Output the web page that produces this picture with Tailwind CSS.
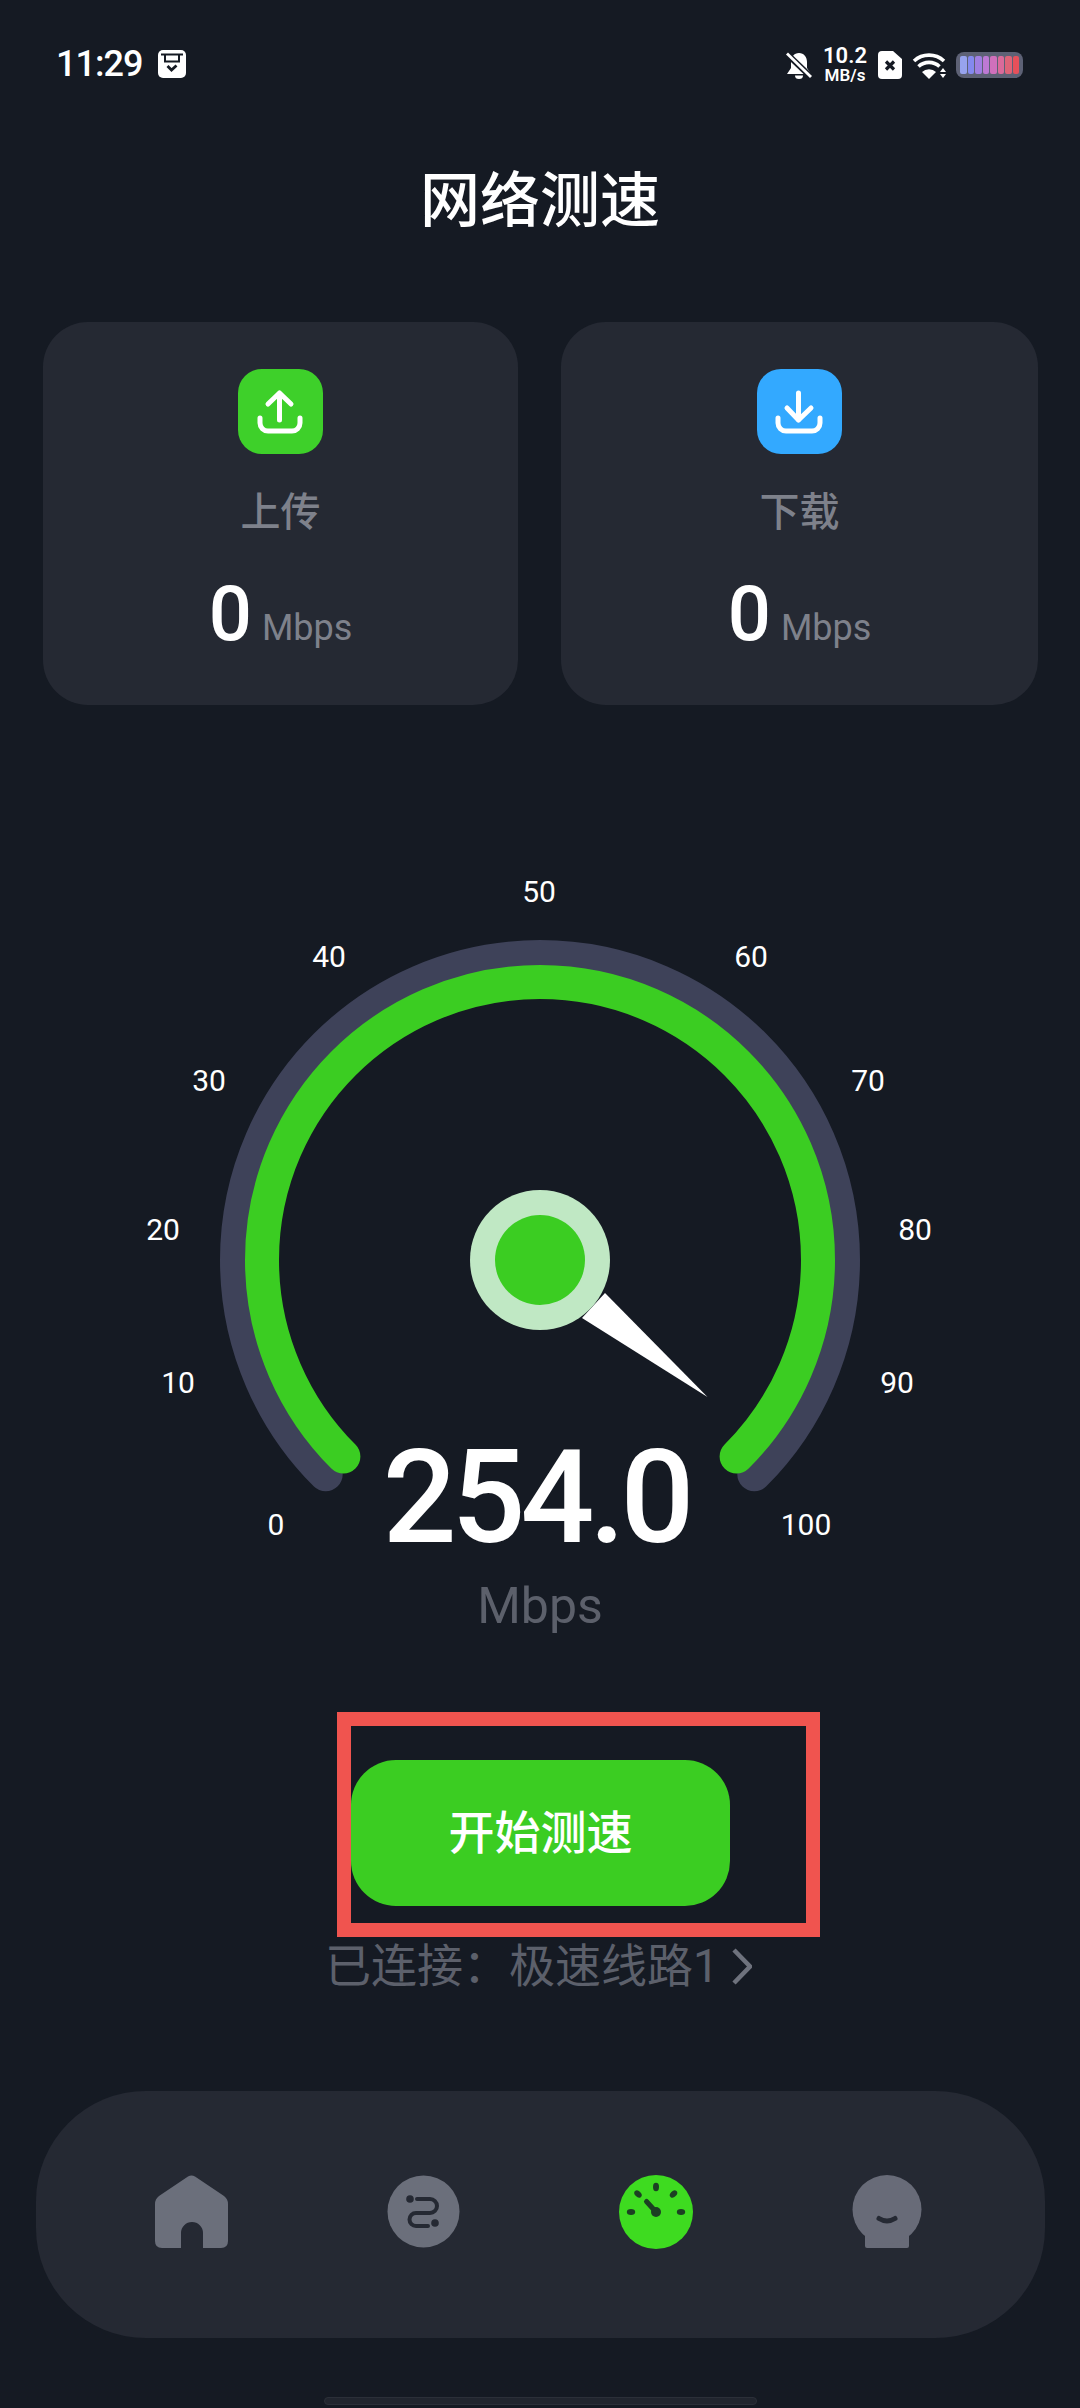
<!DOCTYPE html>
<html lang="zh-CN">
<head>
  <meta charset="UTF-8" />
  <meta name="viewport" content="width=device-width, initial-scale=1.0"/>
  <title>网络测速</title>
  <script src="https://cdn.jsdelivr.net/npm/@tailwindcss/browser@4"></script>
</head>
<body class="bg-[#151a23] font-['Roboto','Noto_Sans_CJK_SC',sans-serif]">
  <div class="w-[1080px] h-[2408px] overflow-hidden flex flex-col">

    <!-- Status bar -->
    <div class="h-[110px] pl-[56px] pr-[57px] pt-[48px] flex items-start justify-between text-white">
      <div class="flex items-center gap-[16px] h-[32px]">
        <span class="text-[36px] leading-[32px] font-medium tracking-[-1px]">11:29</span>
        <svg width="28" height="28" viewBox="0 0 28 28">
          <rect width="28" height="28" rx="5" fill="#fff"/>
          <path d="M3 4.500H25" stroke="#151a23" stroke-width="2"/>
          <path d="M7 5V11.500H21V5" fill="none" stroke="#151a23" stroke-width="2"/>
          <path d="M9.500 16L13.500 20L18.500 15.500" fill="none" stroke="#151a23" stroke-width="2.800"/>
        </svg>
      </div>
      <div class="flex items-center h-[38px] -mt-[2px]">
        <svg width="26" height="27" viewBox="0 0 26 27" class="mr-[11px]">
          <path d="M13 1C18 1 21 5 21 10V16L25 22H1L5 16V10C5 5 8 1 13 1Z" fill="#fff"/>
          <path d="M9 23.500H17A4 3.500 0 0 1 9 23.500Z" fill="#fff"/>
          <path d="M1 2L25 25" stroke="#151a23" stroke-width="6"/>
          <path d="M1 1.500L25 25" stroke="#fff" stroke-width="2.800"/>
        </svg>
        <div class="flex flex-col w-[44px] mr-[11px] font-semibold text-center">
          <span class="text-[22px] leading-[20px]">10.2</span>
          <span class="text-[17px] leading-[18px]">MB/s</span>
        </div>
        <svg width="24" height="28" viewBox="0 0 24 28" class="mr-[10px]">
          <path d="M4 0H15L24 8V24Q24 28 20 28H4Q0 28 0 24V4Q0 0 4 0Z" fill="#fff"/>
          <path d="M8 10.500L16 18.500M16 10.500L8 18.500" stroke="#151a23" stroke-width="3.200"/>
        </svg>
        <svg width="34" height="27" viewBox="0 0 34 27" class="mr-[10px]">
          <path d="M2 9A22 22 0 0 1 32 9" fill="none" stroke="#fff" stroke-width="3.600"/>
          <path d="M6.500 14.500A15.500 15.500 0 0 1 27.500 14.500" fill="none" stroke="#fff" stroke-width="3.600"/>
          <path d="M10 20A10 10 0 0 1 24 20L17 27Z" fill="#fff"/>
          <path d="M28 20l3-4 3 4zM28 22l3 4 3-4z" fill="#fff"/>
        </svg>
        <div class="w-[67px] h-[26px] rounded-[8px] bg-[#5d6175] flex gap-[1px] p-[4px]">
          <span class="flex-1 rounded-[2px] bg-[#97a3ee]"></span>
          <span class="flex-1 rounded-[2px] bg-[#8489ef]"></span>
          <span class="flex-1 rounded-[2px] bg-[#a07fe2]"></span>
          <span class="flex-1 rounded-[2px] bg-[#bd79d4]"></span>
          <span class="flex-1 rounded-[2px] bg-[#d070bc]"></span>
          <span class="flex-1 rounded-[2px] bg-[#da6a9a]"></span>
          <span class="flex-1 rounded-[2px] bg-[#de6478]"></span>
          <span class="flex-1 rounded-[2px] bg-[#e6505a]"></span>
        </div>
      </div>
    </div>

    <!-- Title -->
    <h1 class="mt-[52px] text-center text-white text-[60px] leading-[80px] font-medium">网络测速</h1>

    <!-- Upload / download cards -->
    <div class="mt-[80px] pl-[43px] flex gap-[43px]">
      <div class="w-[475px] h-[383px] rounded-[45px] bg-[#252933] flex flex-col items-center pt-[47px]">
        <div class="w-[85px] h-[85px] rounded-[24px] bg-[#3ed02a]">
          <svg width="85" height="85" viewBox="0 0 85 85" fill="none" stroke="#fff" stroke-width="5" stroke-linecap="round" stroke-linejoin="round">
            <path d="M41.500 24V51M30 35L41.500 24L53 35"/>
            <path d="M22 49V54A8 8 0 0 0 30 62H54A8 8 0 0 0 62 54V49"/>
          </svg>
        </div>
        <div class="mt-[34px] text-[40px] leading-[50px] text-[#7e818b] font-medium">上传</div>
        <div class="mt-[34px] flex items-baseline gap-[10px] text-white">
          <span class="text-[76px] leading-[84px] font-medium">0</span>
          <span class="text-[36px] leading-[40px] text-[#7e818b]">Mbps</span>
        </div>
      </div>
      <div class="w-[477px] h-[383px] rounded-[45px] bg-[#252933] flex flex-col items-center pt-[47px]">
        <div class="w-[85px] h-[85px] rounded-[24px] bg-[#33a9ff]">
          <svg width="85" height="85" viewBox="0 0 85 85" fill="none" stroke="#fff" stroke-width="5" stroke-linecap="round" stroke-linejoin="round">
            <path d="M41.500 24V51M30 39L41.500 51L54 39"/>
            <path d="M21 49V54A8 8 0 0 0 29 62H55A8 8 0 0 0 63 54V49"/>
          </svg>
        </div>
        <div class="mt-[34px] text-[40px] leading-[50px] text-[#7e818b] font-medium">下载</div>
        <div class="mt-[34px] flex items-baseline gap-[10px] text-white">
          <span class="text-[76px] leading-[84px] font-medium">0</span>
          <span class="text-[36px] leading-[40px] text-[#7e818b]">Mbps</span>
        </div>
      </div>
    </div>

    <!-- Gauge -->
    <div class="relative mt-[155px] w-[1080px] h-[800px] shrink-0">
      <svg width="1080" height="800" viewBox="0 0 1080 800">
        <!-- centre is 540,400 in this box -->
        <path d="M325.700 614.300A303 303 0 1 1 754.300 614.300" fill="none" stroke="#3e4259" stroke-width="34" stroke-linecap="round"/>
        <path d="M343.400 596.600A278 278 0 1 1 736.600 596.600" fill="none" stroke="#3bcd22" stroke-width="34" stroke-linecap="round"/>
        <path d="M605 433L707.500 537L582 458Z" fill="#fff"/>
        <circle cx="540" cy="400" r="70" fill="#c0e8c4"/>
        <circle cx="540" cy="400" r="45" fill="#3bcd22"/>
        <g fill="#fff" font-size="30" text-anchor="middle" dominant-baseline="central">
          <text x="276" y="664">0</text>
          <text x="178" y="522">10</text>
          <text x="163" y="369">20</text>
          <text x="209" y="220">30</text>
          <text x="329" y="96">40</text>
          <text x="539" y="31">50</text>
          <text x="751" y="96">60</text>
          <text x="868" y="220">70</text>
          <text x="915" y="369">80</text>
          <text x="897" y="522">90</text>
          <text x="806" y="664">100</text>
        </g>
      </svg>
      <div class="absolute left-0 top-[563px] w-full pr-[8px] text-center text-white text-[130px] leading-[150px] font-medium tracking-[-5px]">254.0</div>
      <div class="absolute left-0 top-[716px] w-full text-center text-[#5c606b] text-[50px] leading-[60px]">Mbps</div>
    </div>

    <!-- Start button -->
    <div class="relative mt-[100px] ml-[351px] w-[379px] h-[146px] shrink-0 rounded-[45px] bg-[#3bcd22] flex items-center justify-center text-white text-[46px] font-medium">
      开始测速
      <div class="absolute left-[-14px] top-[-48px] w-[483px] h-[225px] border-[14px] border-[#f0544f]"></div>
    </div>

    <!-- Connected line -->
    <div class="mt-[28px] pl-[325px] h-[64px] flex items-center text-[#5c606b] text-[46px]">
      <span>已连接：极速线路1</span>
      <svg width="20" height="37" viewBox="0 0 20 37" class="ml-[13px]" fill="none" stroke="#6e727d" stroke-width="4.500">
        <path d="M2 2L18 18.500L2 35"/>
      </svg>
    </div>

    <!-- Bottom nav -->
    <div class="mt-[93px] ml-[36px] w-[1009px] h-[247px] shrink-0 rounded-[110px] bg-[#252933] pl-[119px] pr-[123px] pt-[84px] flex justify-between items-start">
      <svg width="73" height="73" viewBox="0 0 73 73">
        <path d="M33 1.500Q36.500 -0.500 40 1.500L69 21Q73 24 73 29V66Q73 73 66 73H48V58A11 11 0 0 0 26 58V73H7Q0 73 0 66V29Q0 24 4 21Z" fill="#6b6f7b"/>
      </svg>
      <svg width="73" height="73" viewBox="0 0 73 73">
        <circle cx="36.500" cy="36.500" r="36" fill="#6b6f7b"/>
        <circle cx="23" cy="24" r="3.800" fill="#252933"/>
        <circle cx="48" cy="48" r="3.800" fill="#252933"/>
        <path d="M30 24H43A7 7 0 0 1 43 38H29A6.500 6.500 0 0 0 29 51H41" fill="none" stroke="#252933" stroke-width="4" stroke-linecap="round"/>
      </svg>
      <svg width="74" height="74" viewBox="0 0 74 74">
        <circle cx="37" cy="37" r="37" fill="#3edb20"/>
        <g fill="#1c4023">
          <ellipse cx="37" cy="12" rx="3" ry="4.200"/>
          <ellipse cx="19" cy="19" rx="3" ry="4.200" transform="rotate(-45 19 19)"/>
          <ellipse cx="54.500" cy="19" rx="3" ry="4.200" transform="rotate(45 54.500 19)"/>
          <ellipse cx="12" cy="37" rx="4.200" ry="3"/>
          <ellipse cx="62" cy="37" rx="4.200" ry="3"/>
          <circle cx="37" cy="37" r="5"/>
        </g>
        <path d="M27.500 26.500L37 37" stroke="#1c4023" stroke-width="5" stroke-linecap="round"/>
      </svg>
      <svg width="70" height="73" viewBox="0 0 70 73">
        <rect x="13" y="50" width="44" height="23" rx="2" fill="#686b78"/>
        <circle cx="35" cy="34.500" r="34.500" fill="#686b78"/>
        <path d="M27 43.500Q35 48.500 43 43.500" fill="none" stroke="#252933" stroke-width="5" stroke-linecap="round"/>
      </svg>
    </div>

    <!-- Home indicator -->
    <div class="mt-[59px] ml-[324px] w-[433px] h-[8px] shrink-0 rounded-full bg-[#21252e] border border-[#2b2f38]"></div>
  </div>
</body>
</html>
